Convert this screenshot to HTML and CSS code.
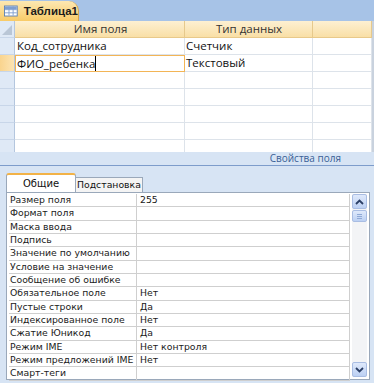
FILE: index.html
```html
<!DOCTYPE html>
<html lang="ru">
<head>
    <meta charset="UTF-8">
    <title>Таблица1</title>
    <link rel="stylesheet" href="styles.css">
</head>
<body>
	<div class="tabbar">
		<div class="doc-tab">
			<svg class="tbl-icon" width="15" height="12" viewBox="0 0 15 12">
				<rect x="0.5" y="0.5" width="14" height="11" fill="#fff" stroke="#5b7fb3"/>
				<rect x="1" y="1" width="13" height="3" fill="#7f9fd0"/>
				<path d="M1 4.5H14M1 8H14M5.5 1V11M10 1V11" stroke="#7f9fd0" stroke-width="1"/>
			</svg>
			<span>Таблица1</span>
		</div>
	</div>

	<div class="design">
		<div class="grow head">
			<div class="sel corner"></div>
			<div class="c1">Имя поля</div>
			<div class="c2">Тип данных</div>
			<div class="c3"></div>
		</div>
		<div class="grow">
			<div class="sel"></div>
			<div class="c1">Код_сотрудника</div>
			<div class="c2">Счетчик</div>
			<div class="c3"></div>
		</div>
		<div class="grow cur">
			<div class="sel"></div>
			<div class="c1"><span class="edit">ФИО_ребенка</span></div>
			<div class="c2">Текстовый</div>
			<div class="c3"></div>
		</div>
		<div class="grow"><div class="sel"></div><div class="c1"></div><div class="c2"></div><div class="c3"></div></div>
		<div class="grow"><div class="sel"></div><div class="c1"></div><div class="c2"></div><div class="c3"></div></div>
		<div class="grow"><div class="sel"></div><div class="c1"></div><div class="c2"></div><div class="c3"></div></div>
		<div class="grow"><div class="sel"></div><div class="c1"></div><div class="c2"></div><div class="c3"></div></div>
		<div class="grow"><div class="sel"></div><div class="c1"></div><div class="c2"></div><div class="c3"></div></div>
	</div>

	<div class="props">
		<div class="props-title">Свойства поля</div>
		<div class="ptabs">
			<div class="ptab active">Общие</div>
			<div class="ptab">Подстановка</div>
		</div>
		<div class="pgrid">
			<div class="plist">
				<div class="prow"><div class="pk">Размер поля</div><div class="pv">255</div></div>
				<div class="prow"><div class="pk">Формат поля</div><div class="pv"></div></div>
				<div class="prow"><div class="pk">Маска ввода</div><div class="pv"></div></div>
				<div class="prow"><div class="pk">Подпись</div><div class="pv"></div></div>
				<div class="prow"><div class="pk">Значение по умолчанию</div><div class="pv"></div></div>
				<div class="prow"><div class="pk">Условие на значение</div><div class="pv"></div></div>
				<div class="prow"><div class="pk">Сообщение об ошибке</div><div class="pv"></div></div>
				<div class="prow"><div class="pk">Обязательное поле</div><div class="pv">Нет</div></div>
				<div class="prow"><div class="pk">Пустые строки</div><div class="pv">Да</div></div>
				<div class="prow"><div class="pk">Индексированное поле</div><div class="pv">Нет</div></div>
				<div class="prow"><div class="pk">Сжатие Юникод</div><div class="pv">Да</div></div>
				<div class="prow"><div class="pk">Режим IME</div><div class="pv">Нет контроля</div></div>
				<div class="prow"><div class="pk">Режим предложений IME</div><div class="pv">Нет</div></div>
				<div class="prow"><div class="pk">Смарт-теги</div><div class="pv"></div></div>
			</div>
			<div class="vscroll">
				<div class="sbtn">
					<svg width="9" height="6" viewBox="0 0 9 6"><path d="M1 5L4.5 1.5L8 5" fill="none" stroke="#2b3f66" stroke-width="1.8"/></svg>
				</div>
				<div class="thumb">
					<svg width="7" height="7" viewBox="0 0 7 7"><path d="M1 1.5H6M1 3.5H6M1 5.5H6" stroke="#8fa9d6" stroke-width="1"/></svg>
				</div>
				<div class="track"></div>
				<div class="sbtn">
					<svg width="9" height="6" viewBox="0 0 9 6"><path d="M1 1L4.5 4.5L8 1" fill="none" stroke="#2b3f66" stroke-width="1.8"/></svg>
				</div>
			</div>
		</div>
	</div>
</body>
</html>
```

FILE: styles.css
```css
	body{
		margin: 0;
		width: 374px;
		height: 383px;
		overflow: hidden;
		background: #fff;
		font-family: "Liberation Sans", Arial, sans-serif;
	}
	/* tab of the open table */
	.tabbar{
		height: 21px;
		background: #a7c3e7;
		display: flex;
		align-items: flex-end;
	}
	.doc-tab{
		display: flex;
		align-items: center;
		gap: 6px;
		width: 74px;
		flex: none;
		height: 20px;
		padding-left: 4px;
		background: linear-gradient(#fde8b2, #f8cb68);
		border-top-right-radius: 10px;
		border-right: 1px solid #d9a54a;
		font-size: 11.5px;
		font-weight: bold;
		color: #1b1b1b;
	}
	/* upper design grid */
	.design{
		height: 131px;
		overflow: hidden;
		background: #fff;
		border-right: 2px solid #c9d2de;
	}
	.grow{
		display: flex;
		height: 17px;
		font-family: "Open Sans", "Noto Sans", sans-serif;
		font-size: 11.5px;
		line-height: 16px;
		color: #111;
	}
	.grow > div{
		border-bottom: 1px solid #dde3ea;
		border-right: 1px solid #dde3ea;
		box-sizing: border-box;
		height: 17px;
		white-space: nowrap;
	}
	.sel{
		width: 15px;
		background: #dfe9f6;
		border-right-color: #b4c6de !important;
		border-bottom-color: #c8d6e9 !important;
	}
	.c1{
		width: 170px;
		padding-left: 2px;
	}
	.c2{
		width: 128px;
		padding-left: 1px;
	}
	.c3{
		flex: 1;
	}
	.head > div{
		background: linear-gradient(#fdf0d2, #f9dfa6);
		border-right-color: #e6c98c;
		border-bottom-color: #e8c98a;
		text-align: center;
		color: #333;
	}
	.head .corner{
		background: #dfe9f6;
		position: relative;
	}
	.corner::after{
		content: "";
		position: absolute;
		right: 2px;
		bottom: 2px;
		border-left: 10px solid transparent;
		border-bottom: 10px solid #b9c6d6;
	}
	.cur .sel{
		background: linear-gradient(90deg, #f9d48e, #fce4b4);
	}
	.cur .c1{
		border: 1px solid #f3b556;
		padding-left: 1px;
		line-height: 15px;
	}
	.edit{
		border-right: 1px solid #000;
	}
	/* field properties pane */
	.props{
		height: 231px;
		background: #d7e4f4;
		padding: 0 4px 0 6px;
	}
	.props-title{
		height: 13px;
		margin-left: -6px;
		margin-right: -4px;
		border-bottom: 1px solid #7d9ccb;
		text-align: right;
		padding-right: 33px;
		font-family: "Open Sans", "Noto Sans", sans-serif;
		font-size: 10px;
		line-height: 13px;
		color: #3a5f96;
	}
	.ptabs{
		display: flex;
		align-items: flex-end;
		margin-top: 7px;
		height: 19px;
	}
	.ptab{
		height: 14px;
		padding: 0 1px;
		border: 1px solid #9aa8ba;
		border-bottom: none;
		border-left: none;
		background: #f4f4f4;
		font-family: "DejaVu Sans", sans-serif;
		font-size: 9.3px;
		line-height: 14px;
		color: #111;
	}
	.ptab.active{
		width: 70px;
		height: 19px;
		padding: 0;
		text-align: center;
		background: #fff;
		border-left: 1px solid #9aa8ba;
		border-top: 2px solid #f2b247;
		border-radius: 3px 3px 0 0;
		box-sizing: border-box;
		font-size: 10px;
		line-height: 17px;
	}
	.pgrid{
		display: flex;
		width: 364px;
		height: 188px;
		box-sizing: border-box;
		background: #fff;
		border: 1px solid #9aa8ba;
		padding: 1px 2px 2px 2px;
	}
	.plist{
		flex: 1;
	}
	.prow{
		display: flex;
		height: 13.33px;
		box-sizing: border-box;
		border-bottom: 1px solid #cfcfcf;
		font-family: "DejaVu Sans", sans-serif;
		font-size: 9.3px;
		line-height: 12px;
		color: #1a1a1a;
	}
	.pk{
		width: 126px;
		padding-left: 1px;
		border-right: 1px solid #cfcfcf;
		white-space: nowrap;
	}
	.pv{
		flex: 1;
		padding-left: 3px;
		border-right: 1px solid #cfcfcf;
		white-space: nowrap;
	}
	.vscroll{
		width: 15px;
		margin-left: 2px;
		display: flex;
		flex-direction: column;
		background: #f3f4f6;
	}
	.sbtn, .thumb{
		height: 15px;
		display: flex;
		align-items: center;
		justify-content: center;
		background: linear-gradient(#dfe9fb, #bcd0f3);
		border: 1px solid #a9bde3;
		box-sizing: border-box;
		border-radius: 2px;
	}
	.thumb{
		height: 12px;
		margin-top: 1px;
	}
	.track{
		flex: 1;
	}
```
